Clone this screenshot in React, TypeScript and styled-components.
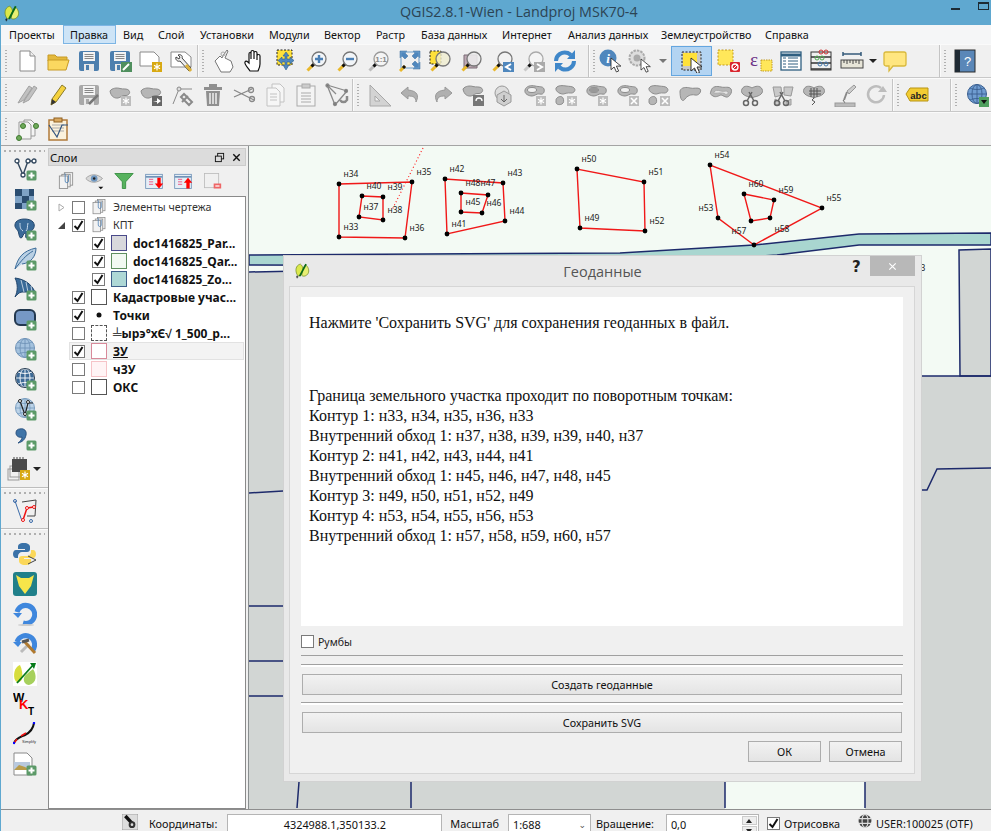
import React from "react";
import styled, { createGlobalStyle } from "styled-components";

const Global = createGlobalStyle`
  html, body { margin: 0; padding: 0; width: 991px; height: 831px; overflow: hidden; background: #f0f0f0; }
  #root { width: 991px; height: 831px; }
`;
const UI = `"Noto Sans", "Open Sans", sans-serif`;

const Win = styled.div`
  position: relative; width: 991px; height: 831px; overflow: hidden; display: flex; flex-direction: column;
  background: #f0f0f0; font-family: ${UI}; font-size: 11.5px; color: #111; box-sizing: border-box; border-left: 1px solid #5fa8d0;
`;
const TitleBar = styled.div`
  height: 25px; flex: none; background: #5fa8d0; display: flex; align-items: center; position: relative; margin-left: -1px;
`;
const TitleLogo = styled.div`width: 18px; height: 18px; margin-left: 3px;`;
const TitleText = styled.div`
  position: absolute; left: 400px; top: 1px; font-size: 14.3px; line-height: 22px; color: #2c4454; white-space: nowrap; font-family: "Open Sans", sans-serif;
`;
const WinCtl = styled.div`position: absolute; top: 2px; right: 0; display: flex; align-items: flex-start;`;
const MinBtn = styled.div`width: 9px; height: 2px; background: #1d2b34; margin: 6px 18px 0 0;`;
const MaxBtn = styled.div`width: 9px; height: 5px; border: 1px solid #1d2b34; border-top-width: 2px; margin: 0 2px 0 0;`;
const MenuBar = styled.div`height: 19px; flex: none; background: #f5f6f7; display: flex; align-items: center; padding-left: 1px;`;
const MenuItem = styled.div<{ $w: number; $on?: boolean }>`
  width: ${p => p.$w}px; height: 19px; line-height: 18px; flex: none; box-sizing: border-box; white-space: nowrap; font-size: 10.8px;
  padding-left: 6px; border: 1px solid transparent;
  ${p => p.$on ? "background: #cde4f7; border-color: #7db5e4;" : ""}
`;
const Row = styled.div<{ $line?: string }>`
  height: 32px; flex: none; display: flex; align-items: center; padding-left: 2px; overflow: hidden; background: #f0f0f0;
  border-top: 1px solid #fafafa; border-bottom: 1px solid ${p => p.$line || "#c8c8c8"}; box-sizing: content-box;
`;
const Handle = styled.div<{ $w?: number }>`
  width: ${p => p.$w || 8}px; flex: none; height: 26px; position: relative;
  &::before { content: ""; position: absolute; left: 2px; top: 2px; bottom: 2px; width: 2px;
    background: repeating-linear-gradient(to bottom, #b0b0b0 0 1px, transparent 1px 3px); }
`;
const VSep = styled.div<{ $ml?: number }>`width: 1px; height: 33px; background: #c4c4c4; flex: none; margin-left: ${p => p.$ml || 0}px; box-shadow: 1px 0 #fafafa; margin-right: 2px;`;
const Btn = styled.div<{ $w?: number; $on?: boolean }>`
  width: ${p => p.$w || 31}px; height: 30px; flex: none; display: flex; align-items: center; justify-content: center; box-sizing: border-box;
  ${p => p.$on ? "background: #b3d4f2; border: 1px solid #64a6e0;" : ""}
`;
const Spacer = styled.div<{ $w: number }>`width: ${p => p.$w}px; flex: none;`;
const Chevrons = styled.div<{ $w?: number }>`width: ${p => p.$w || 15}px; flex: none; font-size: 11px; font-weight: 700; text-align: center; letter-spacing: -1px; font-family: "DejaVu Sans", sans-serif;`;
const Drop = styled.div<{ $w?: number }>`
  width: ${p => p.$w || 12}px; flex: none; display: flex; justify-content: center;
  &::after { content: ""; border-left: 4px solid transparent; border-right: 4px solid transparent; border-top: 4px solid ${p => p.color || "#222"}; }
`;
const Main = styled.div`flex: 1; min-height: 0; display: flex;`;
const LeftBar = styled.div`width: 47px; flex: none; display: flex; flex-direction: column; align-items: center;`;
const LeftHandle = styled.div<{ $h?: number }>`
  height: ${p => p.$h || 8}px; align-self: stretch; margin: 0 3px; flex: none;
  background: repeating-linear-gradient(to right, #b0b0b0 0 2px, transparent 2px 5px) center 4px/100% 2px no-repeat;
`;
const LeftBtn = styled.div`width: 47px; height: 30px; flex: none; display: flex; align-items: center; justify-content: center;`;
const LeftSep = styled.div<{ $mt: number }>`height: 1px; align-self: stretch; margin-top: ${p => p.$mt}px; background: #bdbdbd; box-shadow: 0 1px #fafafa; flex: none;`;
const Panel = styled.div`width: 198px; flex: none; display: flex; flex-direction: column; margin-top: 2px;`;
const PanelHead = styled.div`
  height: 18px; flex: none; background: #dcdcdc; border: 1px solid #cbcbcb; box-sizing: border-box; display: flex; align-items: center; padding: 0 3px 0 1px; font-size: 11.3px;
`;
const PanelTitle = styled.div`flex: 1;`;
const PanelTools = styled.div`height: 30px; flex: none; display: flex; align-items: center; padding-left: 3px;`;
const PanelTool = styled.div`width: 29.3px; flex: none; display: flex; justify-content: center;`;
const Tree = styled.div`flex: 1; background: #fff; border: 1px solid #8a8a8a; padding-top: 1px; min-height: 0; box-sizing: border-box;`;
const TreeRow = styled.div<{ $sel?: boolean; $child?: boolean }>`
  height: 18px; display: flex; align-items: center; box-sizing: border-box; padding-left: ${p => p.$child ? 43 : 23}px; position: relative;
  ${p => p.$sel ? `&::before { content: ""; position: absolute; left: 20px; right: 1px; top: 0; bottom: 0; background: #f3f3f3; border: 1px solid #e2e2e2; }` : ""}
`;
const Expander = styled.div`position: absolute; left: 8px; top: 5px; width: 9px; height: 9px; display: flex;`;
const Check = styled.div<{ $on?: boolean }>`
  width: 13px; height: 13px; box-sizing: border-box; border: 1px solid #7a7a7a; background: #fff; flex: none; position: relative; display: flex;
`;
const Swatch = styled.div<{ $fill?: string; $line?: string; $dash?: boolean }>`
  width: 16px; height: 16px; box-sizing: border-box; margin-left: 6px; margin-right: 6px; flex: none; background: ${p => p.$fill || "#fff"};
  border: 1px ${p => p.$dash ? "dashed" : "solid"} ${p => p.$line || "#555"}; position: relative;
`;
const IconSlot = styled.div`width: 16px; height: 16px; margin: 0 6px; flex: none; display: flex; align-items: center; justify-content: center;`;
const LayerName = styled.div<{ $b?: boolean; $u?: boolean }>`
  position: relative; white-space: nowrap; font-size: ${p => p.$b ? 12 : 10.7}px; color: ${p => p.$b ? "#111" : "#333"}; font-weight: ${p => p.$b ? 700 : 400};
  text-decoration: ${p => p.$u ? "underline" : "none"}; font-family: "Noto Sans", sans-serif;
`;
const Canvas = styled.div`flex: 1; min-width: 0; margin-left: 2px; background: #f3faf4; border-left: 1px solid #8a8f90; overflow: hidden; display: flex;`;
const MapSvg = styled.svg`display: block; width: 742px; height: 664px; flex: none;`;
const Status = styled.div`
  height: 17px; flex: none; display: flex; align-items: flex-start; border-top: 1px solid #8e8e8e; padding: 4px 0 0 121px; overflow: hidden; font-size: 10.9px; white-space: nowrap; box-sizing: content-box;
`;
const SLabel = styled.div<{ $ml: number }>`margin-left: ${p => p.$ml}px; line-height: 20px; flex: none;`;
const SField = styled.div<{ $w: number; $ml: number; $c?: boolean }>`
  width: ${p => p.$w}px; margin-left: ${p => p.$ml}px; height: 24px; flex: none; background: #fff; border: 1px solid #b5b5b5; box-sizing: border-box; position: relative;
  padding: 0 ${p => p.$c ? 0 : 4}px; line-height: 20px; text-align: ${p => p.$c ? "center" : "left"};
`;
const ComboArrow = styled.div`position: absolute; right: 4px; top: 5px; font-size: 9px; color: #555; line-height: 10px; font-family: "DejaVu Sans", sans-serif;`;
const Spin = styled.div`position: absolute; right: 1px; top: 1px; width: 15px; display: flex; flex-direction: column; gap: 1px;`;
const SpinBtn = styled.div<{ $up?: boolean }>`
  height: 9px; background: #eee; border: 1px solid #ccc; box-sizing: border-box; display: flex; align-items: center; justify-content: center;
  &::after { content: ""; border-left: 3px solid transparent; border-right: 3px solid transparent;
    ${p => p.$up ? "border-bottom: 4px solid #222;" : "border-top: 4px solid #222;"} }
`;
const SCheck = styled(Check)`margin-left: 8px; margin-top: 3px;`;

const Dialog = styled.div`
  position: absolute; left: 282px; top: 255px; width: 639px; height: 527px; background: #e9e9e9; border: 1px solid #d2d2d2; box-sizing: border-box; display: flex; flex-direction: column;
`;
const DTitle = styled.div`height: 30px; flex: none; position: relative; display: flex; justify-content: center; padding-top: 5px; box-sizing: border-box; font-size: 14.5px; color: #555; line-height: 22px; font-family: "Open Sans", sans-serif;`;
const DLogo = styled.div`position: absolute; left: 10px; top: 6px; width: 17px; height: 17px;`;
const DHelp = styled.div`position: absolute; left: 568px; top: 0; font-weight: 700; font-size: 15px; color: #222; line-height: 22px; font-family: "DejaVu Sans", sans-serif;`;
const DClose = styled.div`position: absolute; left: 586px; top: 0; width: 45px; height: 20px; background: #b8b8b8; display: flex; align-items: center; justify-content: center;`;
const DFrame = styled.div`
  flex: 1; margin: 0 6px 7px 5px; background: #f0f0f0; border: 1px solid #d6d6d6; box-sizing: border-box; padding: 10px 11px 11px 11px; display: flex; flex-direction: column; min-height: 0;
`;
const TextArea = styled.div`
  height: 329px; flex: none; background: #fff; padding: 16px 8px 0; box-sizing: border-box; font-family: "Liberation Serif", serif; font-size: 16px; line-height: 20px; color: #111; white-space: nowrap;
`;
const TextGap = styled.div`height: 53px;`;
const CheckRow = styled.div`height: 13px; margin-top: 9px; display: flex; align-items: center; gap: 4px; font-size: 10.5px; color: #222; flex: none;`;
const HLine = styled.div`height: 1px; background: #a0a0a0; margin-top: 7px; flex: none;`;
const Progress = styled.div<{ $mt: number }>`height: 3px; box-sizing: border-box; margin-top: ${p => p.$mt}px; border-top: 1px solid #a0a0a0; background: #fff; flex: none;`;
const Wide = styled.div`
  height: 21px; margin: 7px 1px 0; flex: none; background: linear-gradient(#f2f2f2, #e4e4e4); border: 1px solid #adadad; box-sizing: border-box; text-align: center; line-height: 19px; font-size: 10.8px; color: #111;
`;
const DBtns = styled.div`display: flex; justify-content: flex-end; gap: 8px; margin: 8px 1px 0 0; flex: none;`;
const DBtn = styled.div`
  width: 73px; height: 21px; background: linear-gradient(#f2f2f2, #e4e4e4); border: 1px solid #adadad; box-sizing: border-box; text-align: center; line-height: 19px; font-size: 10.8px; color: #111;
`;

/* ---------- icons ---------- */
const Svg = styled.svg<{ $o?: number }>`display: block; flex: none; opacity: ${p => p.$o ?? 1};`;
const Plus = <g><rect x="13.5" y="13.5" width="10" height="10" rx="1.5" fill="#5c9a68" /><path d="M18.5 15.5v6M15.5 18.5h6" stroke="#fff" strokeWidth="2" /></g>;
const Star = (c = "#bdbdbd") => <g><rect x="13" y="13" width="10" height="10" fill={c} /><path d="M18 14.5v7M15 16.3l6 3.4M21 16.3l-6 3.4" stroke="#fff" strokeWidth="1.2" /></g>;
const XB = <g><rect x="13" y="13" width="10" height="10" fill="#bdbdbd" /><path d="M15 15l6 6M21 15l-6 6" stroke="#fff" strokeWidth="1.6" /></g>;
const Blob = (o = 0) => <path transform={`translate(0 ${o})`} d="M2 6c2-3 7-3.500 10-2.500s7-.5 9 2-1 5.500-4 5-4 2-7 2.500-7-1-8-7z" fill="#b6b6b6" stroke="#8c8c8c" />;
const Blob2 = <g><path d="M2 5c2-3 7-2.500 10-2s7 0 8.500 2.500-1.500 5-4 4.500-5 .5-7 1-8.500-2-7.500-6z" fill="#b6b6b6" stroke="#8c8c8c" /><path d="M3 15c2-2 5-2 6 0s1 5-1 6-6 1-6-2 0-3 1-4z" fill="#b6b6b6" stroke="#8c8c8c" /></g>;
const BlobHole = <g><path d="M2 7c1-4 6-5 10-4s8 0 9 3-1 6-4 5-5 2-8 2-8-2-7-6z" fill="#b6b6b6" stroke="#8c8c8c" /><ellipse cx="9" cy="7" rx="4.500" ry="2.500" fill="#f0f0f0" stroke="#8c8c8c" /></g>;
const Mag = (glass = "#f2f2f2", handle = "#e9b82c", ring = "#777") => <g>
  <path d="M8.500 15.500L2.500 21.500" stroke={handle} strokeWidth="3" /><path d="M9 15l-2.500 2.500" stroke="#111" strokeWidth="3" />
  <circle cx="14" cy="10" r="7" fill={glass} stroke={ring} strokeWidth="1.3" /></g>;
const Page = <path d="M5 2h10l5 5v15H5z" fill="#fff" stroke="#8a8a8a" />;
const Floppy = (c: string) => <g><rect x="2" y="2" width="20" height="20" rx="2" fill={c} /><rect x="6" y="3" width="12" height="9" fill="#f4f4f4" /><path d="M7.500 5.500h9M7.500 7.500h9M7.500 9.500h9" stroke="#888" /><rect x="7" y="15" width="10" height="7" fill="#e9e9e9" /><rect x="9" y="16" width="3" height="5" fill={c} /></g>;
const Cursor = (x = 0, y = 0, s = 1) => <path transform={`translate(${x} ${y}) scale(${s})`} d="M0 0v13l3.500-3 2.500 5.500 2.500-1-2.500-5.500H11z" fill="#fff" stroke="#222" strokeWidth=".9" />;
const Scissors = (c = "#8a8a8a") => <g fill="none" stroke={c} strokeWidth="1.500"><circle cx="6" cy="20" r="2.500" /><circle cx="15" cy="20" r="2.500" /><path d="M7 18l5-9M14 18L9 9" /></g>;
const Globe = (c: string, l: string) => <g><circle cx="12" cy="11" r="9.500" fill={c} stroke={l} /><path d="M2.500 11h19M12 1.500v19M5 5c4 2 10 2 14 0M5 17c4-2 10-2 14 0" fill="none" stroke={l} strokeWidth=".9" /><ellipse cx="12" cy="11" rx="5" ry="9.500" fill="none" stroke={l} strokeWidth=".9" /></g>;

const Q: Record<string, React.ReactNode> = {
  qgis: <g><path d="M9 3c-5 1-7 6-6 11s4 7 6 5c5-3 5-13 0-16z" fill="#dbe84b" stroke="#6f8a1e" /><path d="M16 4c4 2 6 8 4 12s-7 5-9 3c1-6 1-11 5-15z" fill="#e7ef73" stroke="#6f8a1e" /><path d="M8 20L17 3" stroke="#0a6a1a" strokeWidth="2.500" /><path d="M3 21h3M4.500 19v4" stroke="#111" /></g>,
  new: <g>{Page}<path d="M15 2v5h5" fill="#eee" stroke="#8a8a8a" /></g>,
  open: <g><path d="M2 6h7l2 2h10v4H2z" fill="#e4b93c" stroke="#c79a24" /><path d="M2 11h21l-3 10H2z" fill="#fbd860" stroke="#c79a24" /></g>,
  save: Floppy("#4d7fae"),
  saveas: <g>{Floppy("#4d7fae")}<rect x="13" y="13" width="11" height="10" fill="#4f8f5e" /><path d="M15 21l6-6" stroke="#fff" strokeWidth="2" /></g>,
  newprint: <g><path d="M1 3h14l5 5v9H1z" fill="#fff" stroke="#8a8a8a" />{Star("#d8a912")}</g>,
  printmgr: <g><path d="M1 3h14l6 5v10H1z" fill="#fff" stroke="#8a8a8a" /><path d="M8 6c3-1 5 1 4 3l9 10-2 3L10 12c-2 1-5-1-4-4l3 2 1-2z" fill="#eee" stroke="#444" /><path d="M16 16l5 6" stroke="#dcb23c" strokeWidth="3" /></g>,
  touch: <g fill="#fff" stroke="#777"><path d="M3 12l5-5 2 2c1-3 3-5 5-8l1 1-3 7 6 3 2 6-3 5H9z" /><circle cx="11" cy="5" r="2" fill="none" stroke="#aaa" /></g>,
  pan: <path d="M7 22c-2-3-6-7-5-9s3 0 4 1V5c0-2 2-2 2 0v5-7c0-2 3-2 3 0v7-6c0-2 3-2 3 0v7-4c0-2 3-2 3 0v8c0 3-1 5-2 7z" fill="#fff" stroke="#111" strokeWidth="1.200" />,
  pansel: <g><rect x="3" y="1" width="15" height="15" fill="#ffe13a" stroke="#222" strokeDasharray="2 1.500" /><path d="M12 3l3 4h-2v3h3V8l4 3.500-4 3.500v-2h-3v3h2l-3 5-3-5h2v-3H8v2l-4-3.500L8 8v2h3V7H9z" fill="#4f87bd" stroke="#2e5f90" strokeWidth=".6" /></g>,
  zin: <g>{Mag("#f2f5f8")}<path d="M14 6v8M10 10h8" stroke="#4a7fb5" strokeWidth="2.400" /></g>,
  zout: <g>{Mag("#f2f5f8")}<path d="M10 10h8" stroke="#4a7fb5" strokeWidth="2.400" /></g>,
  z11: <g>{Mag("#f4f4f4", "#bdbdbd", "#999")}<text x="14" y="13" textAnchor="middle" fontSize="8" fontWeight="700" fill="#888" fontFamily="Liberation Sans">1:1</text></g>,
  zfull: <g><path d="M2 2h7l-2 2 3 3-3 3-3-3-2 2zM22 2v7l-2-2-3 3-3-3 3-3-2-2zM22 20h-7l2-2-3-3 3-3 3 3 2-2z" fill="#4f87bd" stroke="#3c6f9f" strokeWidth=".5" /><rect x="3" y="3" width="18" height="16" fill="none" stroke="#6a9bc8" /><path d="M7 17l-5 5" stroke="#e9b82c" strokeWidth="3" /><path d="M7 17l-2 2" stroke="#111" strokeWidth="3" /></g>,
  zsel: <g><rect x="1" y="2" width="11" height="13" fill="#ffe13a" stroke="#222" strokeDasharray="2 1.500" />{Mag("#f0edd0cc")}</g>,
  zlayer: <g><path d="M4 6h13v13H4z" fill="#bda8b4" stroke="#7a6a74" />{Mag("#eeeeeedd")}</g>,
  zlast: <g>{Mag("#f2f2f2")}<rect x="12" y="13" width="11" height="10" fill="#4f87bd" /><path d="M20 15l-5 3 5 3" fill="none" stroke="#fff" strokeWidth="2" /></g>,
  znext: <g>{Mag("#f4f4f4", "#c9c9c9", "#aaa")}<rect x="12" y="13" width="11" height="10" fill="#aaa" /><path d="M15 15l5 3-5 3" fill="none" stroke="#fff" strokeWidth="2" /></g>,
  refresh: <g fill="none" stroke="#3f87c9" strokeWidth="4"><path d="M3 12C3 6 9 2 15 4l3 2" /><path d="M21 12c0 6-6 10-12 8l-3-2" /><path d="M22 1v9h-8zM2 23v-9h8z" fill="#3f87c9" stroke="none" /></g>,
  identify: <g><circle cx="9" cy="9" r="8.500" fill="#4f87bd" /><text x="9" y="14" textAnchor="middle" fontSize="13" fontWeight="700" fontStyle="italic" fill="#fff" fontFamily="Liberation Serif">i</text>{Cursor(12, 9, .9)}</g>,
  action: <g><circle cx="9" cy="9" r="7.500" fill="#ddd" stroke="#aaa" strokeWidth="2" strokeDasharray="2.500 1" /><circle cx="9" cy="9" r="3.500" fill="#aaa" />{Cursor(13, 10, .85)}</g>,
  select: <g><rect x="2" y="3" width="19" height="18" fill="#c9c9c9" stroke="#222" strokeDasharray="2 1.500" /><rect x="3" y="4" width="14" height="13" fill="#ffe13a" />{Cursor(11, 9, 1)}</g>,
  desel: <g><rect x="1" y="1" width="15" height="15" fill="#ffe75a" stroke="#c09a20" strokeDasharray="2 1.500" /><rect x="13" y="13" width="10" height="10" rx="1" fill="#d9262e" /><circle cx="18" cy="18" r="3" fill="none" stroke="#fff" strokeWidth="1.300" /><path d="M16 20l4-4" stroke="#fff" /></g>,
  expr: <g><rect x="12" y="11" width="11" height="11" fill="#ffe75a" stroke="#c09a20" strokeDasharray="1.500 1" /><text x="1" y="17" fontSize="19" fill="#6b2f86" fontFamily="Liberation Serif">ε</text></g>,
  table: <g><rect x="2" y="3" width="20" height="18" fill="#fff" stroke="#2f5f80" strokeWidth="1.300" /><path d="M2 6h20" stroke="#2f5f80" strokeWidth="3" /><path d="M9 9h10M9 12h10M9 15h10M9 18h10M4 9h3M4 12h3M4 15h3M4 18h3" stroke="#2f5f80" /></g>,
  stats: <g fill="none" stroke="#333"><rect x="2" y="3" width="20" height="18" /><path d="M2 8h20M2 14h20M2 20h20" strokeWidth="1.300" /><circle cx="12" cy="3" r="2" stroke="#c33" /><circle cx="17" cy="3" r="2" stroke="#c33" /><circle cx="8" cy="9" r="2" stroke="#5a5" /><circle cx="13" cy="9" r="2" stroke="#5a5" /><circle cx="11" cy="15" r="2" stroke="#47a" /><circle cx="17" cy="15" r="2" stroke="#47a" /></g>,
  measure: <g><path d="M3 5h18M3 3v4M21 3v4" stroke="#345a7a" strokeWidth="1.500" fill="none" /><rect x="1" y="11" width="22" height="8" fill="#e7e5d8" stroke="#444" /><path d="M4 11v3M7 11v4M10 11v3M13 11v4M16 11v3M19 11v4" stroke="#444" /></g>,
  tip: <path d="M3 3h18a2 2 0 012 2v10a2 2 0 01-2 2H10l-4 5v-5H3a2 2 0 01-2-2V5a2 2 0 012-2z" fill="#ffe680" stroke="#d9b93c" strokeWidth="1.300" />,
  help: <g><rect x="3" y="1" width="20" height="22" fill="#5a87b8" stroke="#2a2a2a" /><rect x="3" y="1" width="5" height="22" fill="#1f2a34" /><text x="15.500" y="17" textAnchor="middle" fontSize="13" fill="#fff" fontFamily="Liberation Sans">?</text></g>,
  pencils: <g fill="#bdbdbd" stroke="#999"><path d="M3 20l3-5 8-12 3 2-8 12z" /><path d="M8 20l3-5 8-12 3 2-8 12z" /></g>,
  pencil: <g><path d="M5 22l1-6L16 2l4 3L10 19z" fill="#f5d23e" stroke="#8a7a2a" /><path d="M5 22l1-6 4 3z" fill="#333" /></g>,
  saveedit: <g>{Floppy("#a9a9a9")}<path d="M12 21l9-9" stroke="#777" strokeWidth="2.500" /></g>,
  addf: <g>{Blob(2)}{Star()}</g>,
  movef: <g>{Blob(2)}<rect x="13" y="13" width="10" height="10" fill="#666" /><path d="M14 18h4v-3l4 3-4 3v-2" fill="#fff" /></g>,
  node: <g fill="none" stroke="#8a8a8a"><path d="M3 21L9 6M9 6h13" /><circle cx="9" cy="6" r="2" fill="#ddd" /><path d="M11 14l3-3 8 8-3 3zM12 19l6-6" strokeWidth="2" /></g>,
  trash: <g fill="#8f8f8f"><path d="M5 8h14l-1 15H6z" /><rect x="3" y="4" width="18" height="3" /><rect x="8" y="1" width="8" height="3" /><path d="M9 10v11M12 10v11M15 10v11" stroke="#f0f0f0" strokeWidth="1.500" /></g>,
  cut: <g stroke="#888" fill="none" strokeWidth="1.300"><path d="M2 7l20 10M2 14L20 6" /><circle cx="19" cy="7" r="2.500" /><circle cx="20" cy="16" r="2.500" /></g>,
  copy: <g fill="#f6f6f6" stroke="#c2c2c2"><path d="M9 1h8l4 4v14H9z" /><path d="M4 5h9l4 4v14H4z" /><path d="M7 11h7M7 14h7M7 17h7" /></g>,
  paste: <g fill="#f4f4f4" stroke="#aaa"><rect x="3" y="3" width="18" height="20" /><rect x="8" y="1" width="8" height="4" fill="#ccc" /><path d="M7 10h10M7 13h10M7 16h10M7 19h10" /></g>,
  snap: <g fill="none" stroke="#8a8a8a" strokeWidth="1.300"><path d="M2 2l20 6-12 14zM2 2l9 9" /><circle cx="2.500" cy="2.500" r="1.500" fill="#777" /><circle cx="21" cy="8" r="1.500" fill="#777" /><circle cx="10" cy="21" r="1.500" fill="#777" /><path d="M15 17a4 4 0 007 0v-4" strokeWidth="2.500" /></g>,
  ruler: <g fill="#d3d3d3" stroke="#a8a8a8"><path d="M2 2l21 21H2z" /><path d="M7 13l5 5H7z" fill="#f0f0f0" /></g>,
  undo: <path d="M9 4L2 10l7 6v-3c5 0 8 1 8 6 3-6 2-11-8-12z" fill="#b0b0b0" stroke="#999" />,
  redo: <path d="M15 4l7 6-7 6v-3c-5 0-8 1-8 6-3-6-2-11 8-12z" fill="#b0b0b0" stroke="#999" />,
  rotf: <g>{Blob(0)}<rect x="12" y="12" width="11" height="11" fill="#777" /><path d="M15 18a3 3 0 116 0" fill="none" stroke="#fff" strokeWidth="1.300" /></g>,
  simp: <g><circle cx="10" cy="10" r="7" fill="#ddd" stroke="#999" /><path d="M12 8l7 4v7l-7 4-7-4v-7z" fill="#cfcfcf" stroke="#999" /><path d="M12 12v6M9 16l3 3 3-3" fill="none" stroke="#666" /></g>,
  addring: <g>{BlobHole}{Star()}</g>,
  addpart: <g>{Blob2}{Star()}</g>,
  fillring: <g>{BlobHole}<ellipse cx="9" cy="7" rx="4.500" ry="2.500" fill="#999" />{Star()}</g>,
  delring: <g>{BlobHole}{XB}</g>,
  delpart: <g>{Blob2}{XB}</g>,
  reshape: <path d="M2 8c1-4 7-4 10-3s8-1 10 1-1 7-5 6-8 1-10 4-5 2-5-8z" fill="#b6b6b6" stroke="#8c8c8c" />,
  offset: <g><path d="M2 8c1-5 6-5 10-4s8-1 10 2-2 9-5 8-4-2-5-2-5 3-8 1-3-2-2-5z" fill="#b6b6b6" stroke="#8c8c8c" /><path d="M5 9c1-2 4-2 7-1s6-1 7 1-2 3-3 2-3-1-5-1-7 1-6-1z" fill="#e4e4e4" stroke="#aaa" /></g>,
  split: <g><path d="M2 6c2-4 7-3 10-1 3-2 8-3 10 1s-2 7-8 8c-1 1-2 1-4 0C4 13 0 10 2 6z" fill="#b6b6b6" stroke="#8c8c8c" />{Scissors("#666")}</g>,
  splitp: <g><path d="M2 4l8 0 1 8-7 2zM13 4l9 0-2 9-7-1zM4 16l5 3v3H4zM20 16l-5 3v3h5z" fill="#c9c9c9" stroke="#999" />{Scissors("#666")}</g>,
  merge: <g><path d="M2 6c2-4 7-3 10-1 3-2 8-3 10 1s-2 7-8 8c-1 1-2 1-4 0C4 13 0 10 2 6z" fill="#b6b6b6" stroke="#8c8c8c" /><path d="M12 5v10l-2 2 3 2-3 3M15 5v9M9 5v9M7 8h12M7 11h12" fill="none" stroke="#555" /></g>,
  weld: <g><path d="M14 8l7-6 2 2-7 7z" fill="#ccc" stroke="#999" /><path d="M14 9l-3 8" stroke="#888" strokeWidth="2" /><path d="M10 17l2 3" stroke="#666" /><rect x="2" y="20" width="20" height="4" fill="#bbb" stroke="#999" /></g>,
  rot: <g fill="none" stroke="#bdbdbd" strokeWidth="2.500"><path d="M20 12a8 8 0 11-3-7" /><path d="M14 9h9l-4-6z" fill="#bdbdbd" stroke="none" /></g>,
  abc: <g><path d="M1 11l4-6h18v13H5z" fill="#f2cc33" stroke="#b89413" /><text x="13.500" y="15.500" textAnchor="middle" fontSize="9.500" fontWeight="700" fill="#222" fontFamily="Liberation Sans">abc</text></g>,
  plug: <g>{Globe("#6f9cd0", "#3a5f90")}<rect x="14" y="14" width="10" height="10" fill="#4f9f5e" /><path d="M16 17h6l-3 4z" fill="#111" /></g>,
  doc1: <g fill="#f4f4f4" stroke="#999"><path d="M9 3h7l4 4v12H9z" /><path d="M4 5h9l3 3v14H4z" /><circle cx="4" cy="21" r="2.500" fill="#6faa5a" stroke="#3f7a30" /><circle cx="8" cy="9" r="2.500" fill="#6faa5a" stroke="#3f7a30" /><circle cx="21" cy="9" r="2.500" fill="#6faa5a" stroke="#3f7a30" /></g>,
  doc2: <g><rect x="3" y="3" width="18" height="20" fill="#fbf2dc" stroke="#b07a3a" strokeWidth="1.500" /><rect x="8" y="1" width="8" height="4" fill="#d8a860" stroke="#906020" /><path d="M6 8h12M6 11h12M6 14h12" stroke="#aaa" /><path d="M3 8l8 12 5-12h6" fill="none" stroke="#33557f" strokeWidth="1.200" /></g>,
  aV: <g><path d="M4 4l6 14 5-14h5" fill="none" stroke="#33485e" strokeWidth="1.400" /><g fill="#fff" stroke="#33485e" strokeWidth="1.300"><circle cx="4" cy="4" r="2" /><circle cx="10" cy="18" r="2" /><circle cx="15" cy="4" r="2" /><circle cx="21" cy="4" r="2" /></g>{Plus}</g>,
  aR: <g><path d="M2 2h7v7H2zM16 2h5v7h-5zM9 9h7v7H9zM2 16h7v6H2z" fill="#2b4d70" /><path d="M9 2h7v7H9zM2 9h7v7H2zM16 9h5v7h-5zM9 16h5v6H9z" fill="#7ea2c5" />{Plus}</g>,
  aP: <g><path d="M3 5c3-4 14-4 17 0s0 8-2 9-1 7-4 7 0-5-2-5-2 5-4 5-2-5-3-7-5-4-2-9z" fill="#3a6a98" stroke="#21456c" /><path d="M7 6c0 4 0 6 3 8M15 6c-1 4 0 6-2 8" stroke="#cde" fill="none" />{Plus}</g>,
  aS: <g><path d="M2 22C5 10 10 4 23 1c0 8-5 15-14 16" fill="#b9d0e4" stroke="#3a6a98" /><path d="M2 22C8 14 13 8 20 4" stroke="#3a6a98" fill="none" />{Plus}</g>,
  aM: <g><path d="M2 1c8 1 16 5 20 14H9c-3 0-5 3-7 5 3-6 3-13 0-19z" fill="#3a6a98" stroke="#21456c" /><path d="M8 3l3 12M13 5l2 10M18 9l1 6" stroke="#bcd" />{Plus}</g>,
  aO: <g><rect x="2" y="3" width="20" height="15" rx="5" fill="#7698c5" stroke="#23384f" strokeWidth="2" />{Plus}</g>,
  aW: <g>{Globe("#a4c2de", "#6f93b8")}{Plus}</g>,
  aC: <g>{Globe("#3d6a96", "#fff")}<circle cx="12" cy="11" r="9.500" fill="none" stroke="#23384f" />{Plus}</g>,
  aF: <g>{Globe("#bcd3e8", "#7a9ec0")}<path d="M7 4l5 14 3-12h5" fill="none" stroke="#222" strokeWidth="1.200" /><circle cx="7" cy="4" r="1.500" fill="#fff" stroke="#222" /><circle cx="15" cy="5" r="1.500" fill="#fff" stroke="#222" /><circle cx="12" cy="17" r="1.500" fill="#fff" stroke="#222" />{Plus}</g>,
  aD: <g><path d="M7 2c4-1 7 2 6 6-1 5-4 7-8 8 3-2 4-4 4-6-3 1-6-1-6-4s2-4 4-4z" fill="#3f74a8" stroke="#2a5280" />{Plus}</g>,
  aVt: <g><rect x="1" y="12" width="11" height="11" fill="none" stroke="#999" /><rect x="3" y="9" width="11" height="11" fill="none" stroke="#999" /><rect x="5" y="2" width="15" height="13" fill="#4a4a4a" /><path d="M7 0v2M10 0v2M13 0v2M16 0v2" stroke="#444" />{Star("#d8a912")}</g>,
  digit: <g fill="none"><path d="M2 2l7 20" stroke="#3a6aa8" /><circle cx="2" cy="2" r="1.500" stroke="#3a6aa8" /><path d="M9 3l14-2-1 16H14" stroke="#444" /><path d="M10 21l4-12 7-1" stroke="#e11" strokeWidth="1.500" /><circle cx="14" cy="9" r="1.500" fill="#fff" stroke="#e11" /><circle cx="21" cy="8" r="1.500" fill="#fff" stroke="#e11" /><circle cx="10" cy="21" r="1.500" fill="#fff" stroke="#e11" /><circle cx="18" cy="22" r="1.500" stroke="#3a6aa8" /></g>,
  py: <g><path d="M11 1c-5 0-6 2-6 4v2h7v1H3c-2 0-3 2-3 4s1 4 3 4h2v-2c0-2 2-4 4-4h5c2 0 3-1 3-3V5c0-2-2-4-6-4z" fill="#3a72a8" /><path d="M12 23c5 0 6-2 6-4v-2h-7v-1h9c2 0 3-2 3-4s-1-4-3-4h-2v2c0 2-2 4-4 4H9c-2 0-3 1-3 3v2c0 2 2 4 6 4z" fill="#fbd85a" /><path d="M15 14l8 4-8 4" fill="none" stroke="#444" /></g>,
  plugin: <g><rect x="0" y="0" width="24" height="24" rx="3" fill="#20808a" /><path d="M3 3l5 3h8l5-3-3 11-6 8-6-8z" fill="#f7e54a" /></g>,
  rel: <g fill="none"><path d="M4 10a9 9 0 1 1 6 11" stroke="#3f87dd" strokeWidth="5" /><path d="M0 11h9l-4 5z" fill="#3f87dd" /><ellipse cx="13" cy="23" rx="8" ry="1" fill="#ccc" /></g>,
  relt: <g fill="none"><path d="M4 10a9 9 0 1 1 15 9" stroke="#3f87dd" strokeWidth="5" /><path d="M0 10h9l-4 5z" fill="#3f87dd" /><path d="M8 20l8-8" stroke="#bbb" strokeWidth="3" /><path d="M11 9l11 12" stroke="#b07a30" strokeWidth="3" /><path d="M9 10l7-2" stroke="#555" strokeWidth="3" /></g>,
  leaf: <g><rect x="0" y="0" width="24" height="24" fill="#fff" /><path d="M7 3C1 5 0 14 2 18s6 2 7-1c1-4 0-10-2-14z" fill="#d7dd3c" /><path d="M20 7c4 6 4 14-4 16-3 0-6-3-5-7s6-6 9-9z" fill="#a6d05c" /><path d="M4 21L21 2" stroke="#067a1a" strokeWidth="1.800" /><path d="M17 1h6l-2 6z" fill="#067a1a" /></g>,
  wkt: <g fontFamily="Liberation Sans" fontWeight="700"><text x="0" y="10" fontSize="12" fill="#000">W</text><text x="6" y="17" fontSize="13" fill="#f00">K</text><text x="15" y="23" fontSize="10" fill="#000">T</text></g>,
  simplify: <g><path d="M1 21c2-5 7-6 11-8s8-5 9-12" fill="none" stroke="#111" strokeWidth="2" /><path d="M1 21l3-4M8 14l5-3" stroke="#e11" strokeWidth="1.500" /><circle cx="1" cy="21" r="1.200" fill="#00f" /><circle cx="21" cy="1" r="1.200" fill="#00f" /><text x="9" y="21" fontSize="4" fill="#333" fontFamily="Liberation Sans">Simplify</text></g>,
  img: <g><path d="M1 1h13l5 5v17H1z" fill="#fff" stroke="#8a8a8a" /><rect x="1" y="10" width="16" height="8" fill="#b8c9de" /><path d="M1 18l5-5 6 2 5 3z" fill="#b89b4a" />{Plus}</g>,
  panelGroup: <g fill="#f2f2f2" stroke="#8a8a8a"><rect x="10" y="2" width="10" height="15" /><rect x="7" y="4" width="10" height="15" /><rect x="4" y="6" width="10" height="15" /><path d="M11 3v9a2 2 0 004 0V5" fill="none" stroke="#4a7fb5" /></g>,
  eye: <g><path d="M1 9c5-6 14-6 20 0-6 6-15 6-20 0z" fill="#d8d8d8" stroke="#9a9a9a" /><circle cx="11" cy="9" r="4" fill="#6f97c0" /><circle cx="11" cy="9" r="1.500" fill="#222" /><path d="M16 19h6l-3 3z" fill="#111" /></g>,
  funnel: <g><path d="M1 3h22L14 13v8h-4v-8z" fill="#57b25e" stroke="#2f8a3a" /></g>,
  expd: <g><rect x="2" y="4" width="20" height="17" fill="#e6eef6" stroke="#6f93b8" /><path d="M2 7h20" stroke="#6f93b8" strokeWidth="2" /><path d="M6 10h5M6 13h5M6 16h5" stroke="#e47" /><path d="M16 8v7h-3l5 6 5-6h-3V8z" fill="#f00" /></g>,
  coll: <g><rect x="2" y="4" width="20" height="17" fill="#e6eef6" stroke="#6f93b8" /><path d="M2 7h20" stroke="#6f93b8" strokeWidth="2" /><path d="M6 10h5M6 13h5M6 16h5" stroke="#e47" /><path d="M16 21v-7h-3l5-6 5 6h-3v7z" fill="#f00" /></g>,
  rm: <g><rect x="3" y="3" width="17" height="17" fill="#f0f0f0" stroke="#bbb" /><rect x="14" y="15" width="9" height="6" fill="#e66" /><path d="M16 18h5" stroke="#fff" strokeWidth="1.500" /></g>,
  float: <g fill="none" stroke="#111" strokeWidth="2"><rect x="8" y="3" width="13" height="12" /><rect x="3" y="9" width="13" height="12" fill="#dcdcdc" /></g>,
  close: <path d="M5 5l14 14M19 5L5 19" stroke="#111" strokeWidth="3" />,
  closeW: <path d="M5 5l14 14M19 5L5 19" stroke="#fff" strokeWidth="2.500" />,
  cam: <g><rect x="0" y="0" width="24" height="24" fill="#ddd" stroke="#888" /><path d="M5 3l13 14" stroke="#111" strokeWidth="5" /><circle cx="15" cy="16" r="5" fill="#333" /><circle cx="15" cy="16" r="2" fill="#ddd" /></g>,
  crs: <g><circle cx="12" cy="12" r="11" fill="#444" /><ellipse cx="12" cy="12" rx="5" ry="11" fill="none" stroke="#ddd" strokeWidth="2" /><path d="M1 8h22M1 16h22" stroke="#ddd" strokeWidth="2" /></g>,
};
const Tick = () => <Svg width="11" height="11" viewBox="0 0 11 11"><path d="M1.500 6l3 3 5-8" fill="none" stroke="#111" strokeWidth="2" /></Svg>;
const Ic = ({ n, s = 24, o }: { n: string; s?: number; o?: number }) => (
  <Svg $o={o} width={s} height={s} viewBox="0 0 24 24">{Q[n]}</Svg>
);
const Cb = ({ on }: { on?: boolean }) => <Check>{on ? <Tick /> : null}</Check>;

/* ---------- map ---------- */
const polys: number[][][] = [
  [[339, 237], [339, 184], [412, 182], [405, 238]],
  [[362, 196], [383, 197], [383, 220], [359, 217]],
  [[447, 234], [445, 179], [503, 183], [505, 221]],
  [[461, 193], [488, 195], [482, 213], [461, 212]],
  [[580, 228], [577, 169], [644, 182], [645, 231]],
  [[718, 218], [710, 165], [822, 208], [754, 245]],
  [[744, 194], [774, 200], [770, 218], [751, 221]],
];
const labels: [string, number, number][] = [
  ["н34", 351, 177], ["н35", 424, 175], ["н36", 417, 231], ["н33", 351, 230], ["н40", 374, 189], ["н39", 395, 190], ["н38", 395, 213], ["н37", 371, 210],
  ["н42", 457, 172], ["н43", 515, 176], ["н44", 517, 214], ["н41", 459, 227], ["н48", 473, 186], ["н47", 488, 186], ["н46", 494, 206], ["н45", 473, 205],
  ["н50", 589, 162], ["н49", 592, 221], ["н51", 656, 175], ["н52", 657, 224],
  ["н54", 722, 158], ["н55", 834, 201], ["н53", 706, 211], ["н60", 756, 187], ["н59", 786, 193], ["н58", 782, 232], ["н57", 739, 234], ["3", 923, 271],
];
const navy = "#1d2a6b";
const Map = () => (
  <MapSvg viewBox="249 146 742 664">
    <rect x="249" y="146" width="742" height="664" fill="#f3faf4" />
    <rect x="249" y="272" width="672" height="538" fill="#d2d6d4" />
    <rect x="921" y="376" width="70" height="434" fill="#d2d6d4" />
    <rect x="725" y="782" width="140" height="28" fill="#f3faf4" />
    <path d="M249 255L620 253L754 245L859 234L991 233V245H859L777 255L600 266L249 265Z" fill="#a9d6d0" stroke={navy} strokeWidth="1.500" />
    <path d="M249 272L300 271" stroke={navy} strokeWidth="1.500" />
    <path d="M960 376L959 250L991 249V376Z" fill="#d2d6d4" stroke={navy} strokeWidth="1.500" />
    <path d="M921 376H991M921 490H927L937 469L991 468M249 493L283 491M249 606H283M249 661H283M249 696H283M299 782L297 808M411 782V808M725 782V808M865 782V808" fill="none" stroke={navy} strokeWidth="1.500" />
    <path d="M423 148L392 210" stroke="#f22" strokeWidth="1.200" strokeDasharray="1 2.500" fill="none" />
    {polys.map((p, i) => (
      <g key={i}>
        <polygon points={p.map(q => q.join(",")).join(" ")} fill="none" stroke="#f01818" strokeWidth="1.400" />
        {p.map((q, j) => <circle key={j} cx={q[0]} cy={q[1]} r="2.400" fill="#000" />)}
      </g>
    ))}
    {labels.map(([t, x, y]) => <text key={t} x={x} y={y} textAnchor="middle" fontSize="8.500" fill="#222" fontFamily="Noto Sans, sans-serif">{t}</text>)}
  </MapSvg>
);

const menu: [string, number][] = [["Проекты", 61], ["Правка", 53], ["Вид", 35], ["Слой", 42], ["Установки", 69], ["Модули", 55], ["Вектор", 52], ["Растр", 45], ["База данных", 81], ["Интернет", 66], ["Анализ данных", 93], ["Землеустройство", 104], ["Справка", 70]];
const B = ({ n, w, s, o, on }: { n: string; w?: number; s?: number; o?: number; on?: boolean }) => <Btn $w={w} $on={on}><Ic n={n} s={s} o={o} /></Btn>;
const left1 = ["aV", "aR", "aP", "aS", "aM", "aO", "aW", "aC", "aF", "aD"];
const left3 = ["py", "plugin", "rel", "relt", "leaf", "wkt", "simplify", "img"];
const docLines = [
  "Контур 1: н33, н34, н35, н36, н33",
  "Внутренний обход 1: н37, н38, н39, н39, н40, н37",
  "Контур 2: н41, н42, н43, н44, н41",
  "Внутренний обход 1: н45, н46, н47, н48, н45",
  "Контур 3: н49, н50, н51, н52, н49",
  "Контур 4: н53, н54, н55, н56, н53",
  "Внутренний обход 1: н57, н58, н59, н60, н57",
];

export default function App() {
  return (
    <Win>
      <Global />
      <TitleBar>
        <TitleLogo><Ic n="qgis" s={18} /></TitleLogo>
        <TitleText>QGIS2.8.1-Wien - Landproj MSK70-4</TitleText>
        <WinCtl><MinBtn /><MaxBtn /></WinCtl>
      </TitleBar>
      <MenuBar>{menu.map(([t, w], i) => <MenuItem key={t} $w={w} $on={i === 1}>{t}</MenuItem>)}</MenuBar>
      <Row>
        <Handle />
        {["new", "open", "save", "saveas", "newprint", "printmgr"].map(n => <B key={n} n={n} />)}
        <VSep />
        <Handle />
        {["touch", "pan", "pansel", "zin", "zout", "z11", "zfull", "zsel", "zlayer", "zlast", "znext", "refresh"].map(n => <B key={n} n={n} />)}
        <VSep $ml={8} />
        <Handle $w={5} />
        <B n="identify" w={30} /><B n="action" w={28} /><Drop $w={17} color="#777" />
        <B n="select" w={41} on />
        <B n="desel" w={34} /><B n="expr" w={30} /><B n="table" w={29} /><B n="stats" w={32} /><B n="measure" w={30} /><Drop />
        <B n="tip" w={32} /><Spacer $w={13} /><Chevrons /><VSep />
        <Handle $w={7} /><B n="help" w={30} /><Chevrons $w={10} />
      </Row>
      <Row>
        <Handle />
        <B n="pencils" o={.9} /><B n="pencil" />
        <B n="saveedit" /><B n="addf" /><B n="movef" /><B n="node" /><B n="trash" /><B n="cut" /><B n="copy" /><B n="paste" /><B n="snap" />
        <VSep />
        <Handle $w={9} />
        {["ruler", "undo", "redo", "rotf", "simp", "addring", "addpart", "fillring", "delring", "delpart", "reshape", "offset", "split", "splitp", "merge", "weld", "rot"].map(n => <B key={n} n={n} />)}
        <VSep $ml={1} />
        <Handle $w={7} /><B n="abc" w={30} /><Spacer $w={5} /><Chevrons $w={13} /><VSep />
        <Handle $w={9} /><B n="plug" w={30} />
      </Row>
      <Row $line="#a4a4a4">
        <Handle />
        <B n="doc1" /><B n="doc2" />
      </Row>
      <Main>
        <LeftBar>
          <LeftHandle />
          {left1.map(n => <LeftBtn key={n}><Ic n={n} /></LeftBtn>)}
          <LeftBtn><Ic n="aVt" /><Drop $w={12} /></LeftBtn>
          <LeftSep $mt={3} />
          <LeftHandle />
          <LeftBtn><Ic n="digit" /></LeftBtn>
          <LeftSep $mt={2} />
          <LeftHandle $h={10} />
          {left3.map(n => <LeftBtn key={n}><Ic n={n} /></LeftBtn>)}
        </LeftBar>
        <Panel>
          <PanelHead>
            <PanelTitle>Слои</PanelTitle>
            <Ic n="float" s={11} /><Spacer $w={6} /><Ic n="close" s={11} />
          </PanelHead>
          <PanelTools>
            {["panelGroup", "eye", "funnel", "expd", "coll", "rm"].map(n => <PanelTool key={n}><Ic n={n} s={20} /></PanelTool>)}
          </PanelTools>
          <Tree>
            <TreeRow><Expander><Svg width="9" height="9" viewBox="0 0 9 9"><path d="M2 1l5 3.500-5 3.500z" fill="#fff" stroke="#aaa" /></Svg></Expander><Cb /><IconSlot><Ic n="panelGroup" s={18} /></IconSlot><LayerName>Элементы чертежа</LayerName></TreeRow>
            <TreeRow><Expander><Svg width="9" height="9" viewBox="0 0 9 9"><path d="M8 1v7H1z" fill="#444" /></Svg></Expander><Cb on /><IconSlot><Ic n="panelGroup" s={18} /></IconSlot><LayerName>КПТ</LayerName></TreeRow>
            <TreeRow $child><Cb on /><Swatch $fill="#d8d8dc" $line="#4a4a8a" /><LayerName $b>doc1416825_Par...</LayerName></TreeRow>
            <TreeRow $child><Cb on /><Swatch $fill="#f2f9f2" $line="#5f8f5f" /><LayerName $b>doc1416825_Qar...</LayerName></TreeRow>
            <TreeRow $child><Cb on /><Swatch $fill="#aed8d6" $line="#3d5f8a" /><LayerName $b>doc1416825_Zo...</LayerName></TreeRow>
            <TreeRow><Cb on /><Swatch $line="#555" /><LayerName $b>Кадастровые учас...</LayerName></TreeRow>
            <TreeRow><Cb on /><IconSlot><Svg width="6" height="6" viewBox="0 0 6 6"><circle cx="3" cy="3" r="2.500" fill="#111" /></Svg></IconSlot><LayerName $b>Точки</LayerName></TreeRow>
            <TreeRow><Cb /><Swatch $line="#555" $dash /><LayerName $b>╧ырэ°хЄ√ 1_500_р...</LayerName></TreeRow>
            <TreeRow $sel><Cb on /><Swatch $line="#d88a9a" /><LayerName $b $u>ЗУ</LayerName></TreeRow>
            <TreeRow><Cb /><Swatch $line="#f6c4c8" $fill="#fff4f5" /><LayerName $b>чЗУ</LayerName></TreeRow>
            <TreeRow><Cb /><Swatch $line="#555" /><LayerName $b>ОКС</LayerName></TreeRow>
          </Tree>
        </Panel>
        <Canvas><Map /></Canvas>
      </Main>
      <Status>
        <Ic n="cam" s={16} />
        <SLabel $ml={11}>Координаты:</SLabel>
        <SField $w={215} $ml={10} $c>4324988.1,350133.2</SField>
        <SLabel $ml={8}>Масштаб</SLabel>
        <SField $w={83} $ml={9}>1:688<ComboArrow>⌄</ComboArrow></SField>
        <SLabel $ml={5}>Вращение:</SLabel>
        <SField $w={93} $ml={12}>0,0<Spin><SpinBtn $up /><SpinBtn /></Spin></SField>
        <SCheck><Tick /></SCheck>
        <SLabel $ml={4}>Отрисовка</SLabel>
        <Spacer $w={18} /><Ic n="crs" s={14} />
        <SLabel $ml={4}>USER:100025 (OTF)</SLabel>
      </Status>
      <Dialog>
        <DTitle>
          <DLogo><Ic n="qgis" s={17} /></DLogo>
          Геоданные
          <DHelp>?</DHelp>
          <DClose><Ic n="closeW" s={11} /></DClose>
        </DTitle>
        <DFrame>
          <TextArea>
            Нажмите 'Сохранить SVG' для сохранения геоданных в файл.
            <TextGap />
            Граница земельного участка проходит по поворотным точкам:
            {docLines.map(l => <div key={l}>{l}</div>)}
          </TextArea>
          <CheckRow><Cb /> Румбы</CheckRow>
          <HLine />
          <Progress $mt={8} />
          <Wide>Создать геоданные</Wide>
          <Progress $mt={7} />
          <Wide>Сохранить SVG</Wide>
          <DBtns><DBtn>ОК</DBtn><DBtn>Отмена</DBtn></DBtns>
        </DFrame>
      </Dialog>
    </Win>
  );
}
